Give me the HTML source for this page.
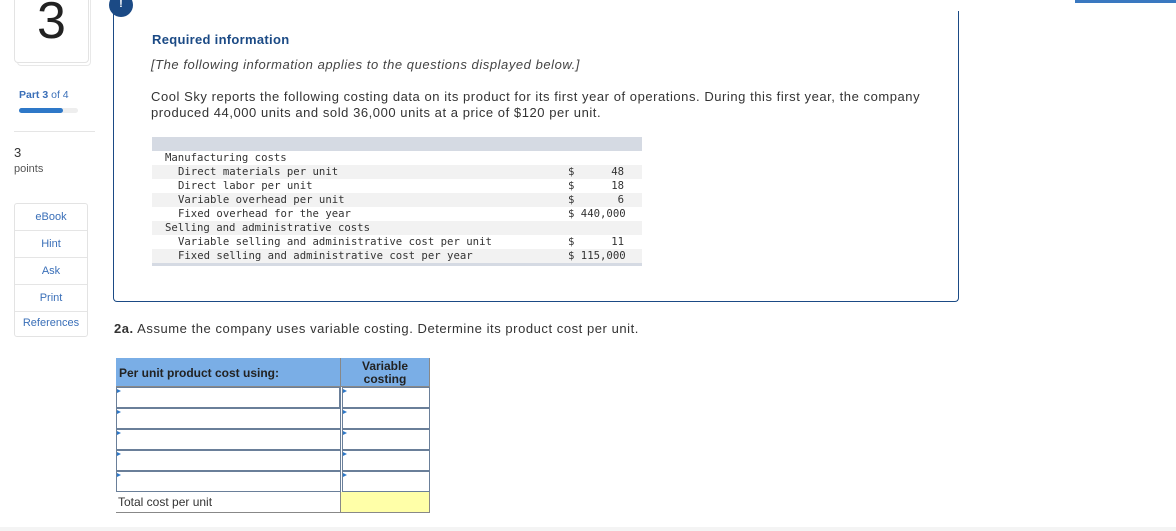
<!DOCTYPE html>
<html><head><style>
body{margin:0;width:1176px;height:531px;background:#fff;position:relative;overflow:hidden;font-family:"Liberation Sans",sans-serif;}
.a{position:absolute}
.mono{font-family:"DejaVu Sans Mono","Liberation Mono",monospace;font-size:10.65px;color:#333}
.btn{height:26px;border-bottom:1px solid #e5e5e5;text-align:center;line-height:26px;font-size:11px;color:#3a6fb8}
.sp{letter-spacing:0.55px}
</style></head><body>
<div class="a" style="left:1075px;top:0;width:101px;height:3px;background:#3a78c0"></div>
<div class="a" style="left:17px;top:-10px;width:72px;height:74px;border:1px solid #e8e8e8;border-radius:4px"></div>
<div class="a" style="left:14px;top:-12px;width:73px;height:73px;border:1px solid #e3e3e3;border-radius:4px;background:#fff;text-align:center;font-size:52px;line-height:64px;color:#222">3</div>
<div class="a" style="left:19px;top:89px;font-size:10.5px;color:#3a6fb8"><b>Part 3</b> of 4</div>
<div class="a" style="left:19px;top:108px;width:59px;height:5px;background:#eee;border-radius:3px"></div>
<div class="a" style="left:19px;top:108px;width:44px;height:5px;background:#2e78c8;border-radius:3px"></div>
<div class="a" style="left:14px;top:131px;width:81px;height:1px;background:#e5e5e5"></div>
<div class="a" style="left:14px;top:145px;font-size:13px;color:#333">3</div>
<div class="a" style="left:14px;top:163px;font-size:11px;color:#555">points</div>
<div class="a" style="left:14px;top:203px;width:72px;border:1px solid #e3e3e3;border-radius:3px">
<div class="btn">eBook</div><div class="btn">Hint</div><div class="btn">Ask</div><div class="btn">Print</div><div class="btn" style="border:0;height:24px;line-height:22px">References</div></div>

<div class="a" style="left:113px;top:11px;width:844px;height:290px;border:1px solid #1b4a85;border-top:0;border-radius:0 0 4px 4px"></div>
<div class="a" style="left:109px;top:-7px;width:24px;height:24px;border-radius:50%;background:#1b4a85;color:#fff;text-align:center;font-size:11px;font-weight:bold;line-height:22px">!</div>
<div class="a sp" style="left:152px;top:32px;font-size:13px;font-weight:bold;color:#1b4a85;letter-spacing:0.3px">Required information</div>
<div class="a sp" style="left:151px;top:57px;font-size:13px;font-style:italic;color:#444">[The following information applies to the questions displayed below.]</div>
<div class="a sp" style="left:151px;top:89px;font-size:13px;color:#333;line-height:16px;width:790px">Cool Sky reports the following costing data on its product for its first year of operations. During this first year, the company produced 44,000 units and sold 36,000 units at a price of $120 per unit.</div>
<div class="a" style="left:152px;top:137px;width:490px;height:14px;background:#d5dae3"></div>
<div class="a" style="left:152px;top:262px;width:490px;height:4px;background:#d5dae3"></div>
<div class="a mono" style="left:152px;top:151px;width:490px;line-height:14px">
<div style="padding-left:13px">Manufacturing costs</div>
<div style="background:#f2f2f2;padding-left:26px;position:relative">Direct materials per unit<span class="a" style="left:416px">$</span><span class="a" style="right:18px">48</span></div>
<div style="padding-left:26px;position:relative">Direct labor per unit<span class="a" style="left:416px">$</span><span class="a" style="right:18px">18</span></div>
<div style="background:#f2f2f2;padding-left:26px;position:relative">Variable overhead per unit<span class="a" style="left:416px">$</span><span class="a" style="right:18px">6</span></div>
<div style="padding-left:26px;position:relative">Fixed overhead for the year<span class="a" style="left:416px">$ 440,000</span></div>
<div style="background:#f2f2f2;padding-left:13px">Selling and administrative costs</div>
<div style="padding-left:26px;position:relative">Variable selling and administrative cost per unit<span class="a" style="left:416px">$</span><span class="a" style="right:18px">11</span></div>
<div style="background:#f2f2f2;padding-left:26px;position:relative">Fixed selling and administrative cost per year<span class="a" style="left:416px">$ 115,000</span></div>
</div>
<div class="a sp" style="left:114px;top:321px;font-size:13px;color:#333"><b>2a.</b> Assume the company uses variable costing. Determine its product cost per unit.</div>

<div class="a" style="left:116px;top:358px;width:224px;height:29px;background:#7aaee6;border-bottom:1px solid #888;font-size:12px;font-weight:bold;color:#222;line-height:30px;padding-left:3px;box-sizing:border-box">Per unit product cost using:</div>
<div class="a" style="left:340px;top:358px;width:90px;height:29px;background:#7aaee6;border:1px solid #888;border-top:0;box-sizing:border-box;font-size:12px;font-weight:bold;color:#222;text-align:center;line-height:13px;padding-top:2px">Variable<br>costing</div>
<div class="a" style="left:116px;top:387px;">
<div style="position:relative;height:21px"><div class="a" style="left:0;width:225px;height:21px;border:1px solid #6a7f99;box-sizing:border-box;border-right:2px solid #6a7f99"></div><div class="a" style="left:226px;width:88px;height:21px;border:1px solid #6a7f99;box-sizing:border-box"></div></div>
<div style="position:relative;height:21px"><div class="a" style="left:0;width:225px;height:21px;border:1px solid #6a7f99;box-sizing:border-box"></div><div class="a" style="left:226px;width:88px;height:21px;border:1px solid #6a7f99;box-sizing:border-box"></div></div>
<div style="position:relative;height:21px"><div class="a" style="left:0;width:225px;height:21px;border:1px solid #6a7f99;box-sizing:border-box"></div><div class="a" style="left:226px;width:88px;height:21px;border:1px solid #6a7f99;box-sizing:border-box"></div></div>
<div style="position:relative;height:21px"><div class="a" style="left:0;width:225px;height:21px;border:1px solid #6a7f99;box-sizing:border-box"></div><div class="a" style="left:226px;width:88px;height:21px;border:1px solid #6a7f99;box-sizing:border-box"></div></div>
<div style="position:relative;height:21px"><div class="a" style="left:0;width:225px;height:21px;border:1px solid #6a7f99;box-sizing:border-box"></div><div class="a" style="left:226px;width:88px;height:21px;border:1px solid #6a7f99;box-sizing:border-box"></div></div>
</div>
<div class="a" style="left:116px;top:492px;width:224px;height:21px;border-bottom:1px solid #888;font-size:12px;color:#333;line-height:21px;padding-left:2px;box-sizing:border-box">Total cost per unit</div>
<div class="a" style="left:340px;top:492px;width:90px;height:21px;background:#ffffa8;border:1px solid #888;border-top:0;box-sizing:border-box"></div>
<svg class="a" style="left:0;top:0" width="1176" height="531">
<g fill="#2e78c8"><path d="M117 389l4 2-4 2z"/><path d="M117 410l4 2-4 2z"/><path d="M117 431l4 2-4 2z"/><path d="M117 452l4 2-4 2z"/><path d="M117 473l4 2-4 2z"/>
<path d="M343 389l4 2-4 2z"/><path d="M343 410l4 2-4 2z"/><path d="M343 431l4 2-4 2z"/><path d="M343 452l4 2-4 2z"/><path d="M343 473l4 2-4 2z"/></g>
</svg>
<div class="a" style="left:0;top:527px;width:1176px;height:4px;background:#f4f4f4"></div>
</body></html>
